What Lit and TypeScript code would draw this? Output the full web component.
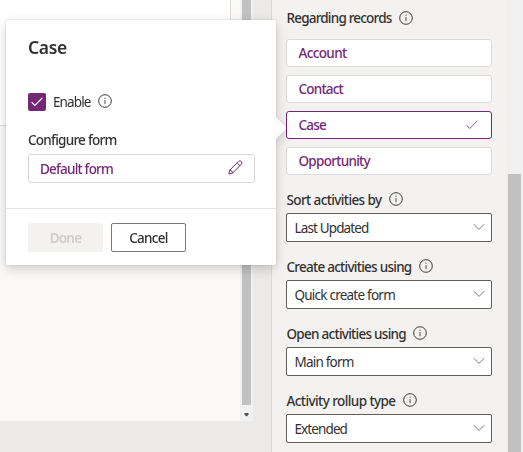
import { LitElement, html, css } from "lit";
import { customElement, property } from "lit/decorators.js";

/** Text set to a given advance width by evening out its tracking. */
@customElement("fit-text")
class FitText extends LitElement {
  @property() text = "";
  @property({ type: Number }) w = 0;
  static styles = css`
    :host { display: inline-block; white-space: nowrap; flex: none; }
  `;
  render() {
    return html`<span>${this.text}</span>`;
  }
  firstUpdated() {
    const span = this.renderRoot.querySelector("span")!;
    const gap = (this.w - span.getBoundingClientRect().width) / this.text.length;
    span.style.letterSpacing = `${gap}px`;
  }
}

const info = html`<svg class="info" width="14" height="14" viewBox="0 0 14 14">
  <circle cx="7" cy="7" r="6.3" fill="none" stroke="#3b3a39" stroke-width="1" />
  <path d="M7 6v4.300M7 3.600v1.100" stroke="#605e5c" stroke-width="1.1" />
</svg>`;

const check = (color: string, width: number) => html`<svg width="12" height="10" viewBox="0 0 12 10">
  <path d="M.6 5.2l3.2 3.3L11.4.9" fill="none" stroke=${color} stroke-width=${width} />
</svg>`;

const chevron = html`<svg width="12" height="8" viewBox="0 0 12 8">
  <path d="M.8 1.2L6 6.4l5.2-5.2" fill="none" stroke="#7a7876" stroke-width="1" />
</svg>`;

const pencil = html`<svg width="15" height="15" viewBox="0 0 15 15">
  <path d="M.8 14.1l1-4L10.5 1.4q1.400-1.200 2.800 0q1.300 1.400 0 2.900L4.700 13zM1.800 10.100q2.300.500 2.900 2.900M9.100 2.800l2.900 2.900"
    fill="none" stroke="#742774" stroke-width="1" stroke-linejoin="round" />
</svg>`;

const records = [
  { name: "Account", w: 48 },
  { name: "Contact", w: 44.500 },
  { name: "Case", w: 27.500, selected: true },
  { name: "Opportunity", w: 71.500 },
];

const options = [
  { label: "Sort activities by", lw: 95, value: "Last Updated", vw: 74 },
  { label: "Create activities using", lw: 125, value: "Quick create form", vw: 100.500 },
  { label: "Open activities using", lw: 119.500, value: "Main form", vw: 59 },
  { label: "Activity rollup type", lw: 109, value: "Extended", vw: 52.500 },
];

@customElement("app-root")
class AppRoot extends LitElement {
  static styles = css`
    :host {
      display: block; position: relative; width: 523px; height: 452px; overflow: hidden;
      font: 13.5px/18px "Noto Sans", "Open Sans", sans-serif; color: #323130; background: #ebeae9;
    }
    * { box-sizing: border-box; }
    svg { display: block; flex: none; }
    .page { display: flex; height: 100%; }
    .left { width: 271px; }
    .canvas { display: flex; width: 253px; height: 421px; background: #faf9f8; }
    .content { width: 240px; }
    .sheet { width: 231px; height: 126px; background: #fff; border: solid #dcdbda; border-width: 0 1px 1px 0; }
    .track { width: 13px; background: #f1f1f1; display: flex; flex-direction: column; align-items: center; }
    .thumb { width: 9px; height: 405px; background: #c1c1c1; margin-bottom: 8px; }
    .side { flex: 1; background: #f3f2f1; border-left: 1px solid #dcdad8; display: flex; justify-content: space-between; }
    .props { padding: 9px 0 0 14px; width: 220px; }
    .label { display: flex; align-items: center; gap: 7px; height: 18px; font-weight: 500; padding-left: .5px; }
    .label .info { position: relative; top: -.5px; }
    .records { display: flex; flex-direction: column; gap: 8px; margin-top: 12px; width: 206px; }
    .record {
      height: 28px; border: 1px solid #dddbd9; border-radius: 3px; background: #fff; color: #742774;
      display: flex; align-items: center; justify-content: space-between; padding: 0 13px 0 11.500px; font-weight: 500;
    }
    .record.selected { border-color: #742774; }
    .options { display: flex; flex-direction: column; gap: 16px; padding-top: 16px; }
    .option { height: 51px; display: flex; flex-direction: column; justify-content: space-between; }
    .option .label { margin-top: -.5px; }
    .select {
      width: 206px; height: 29px; border: 1px solid #605e5c; border-radius: 2px; background: #fff;
      display: flex; align-items: center; justify-content: space-between; padding: 1px 6px 0 7.500px;
    }
    .select svg { margin-top: -2px; }
    .bar { width: 16px; background: #f0f0f0; padding: 174px 0 0 1px; }
    .grip { width: 13px; height: 278px; background: #c1c1c1; }
    .callout {
      position: absolute; left: 6px; top: 20px; width: 270px; height: 245px;
      filter: drop-shadow(0 4px 6px rgba(0, 0, 0, .16)) drop-shadow(0 0 1px rgba(0, 0, 0, .14));
    }
    .box { background: #fff; height: 100%; border-radius: 2px; }
    .beak { position: absolute; left: 269px; top: 97px; width: 11px; height: 22px; background: #fff; clip-path: polygon(0 0, 1px 0, 100% 46%, 100% 54%, 1px 100%, 0 100%); }
    .main { height: 189px; padding: 15px 21px 0 22px; border-bottom: 1px solid #e6e5e4; }
    .title { font-size: 17.5px; line-height: 24px; font-weight: 600; height: 24px; }
    .enable { display: flex; align-items: center; height: 18px; margin-top: 34px; }
    .tick { width: 18px; height: 18px; border-radius: 2px; background: #742774; display: flex; align-items: center; justify-content: center; margin-right: 7px; }
    .enable .info { margin-left: 7px; position: relative; top: -1.500px; }
    .form { font-weight: 500; margin-top: 20px; height: 18px; }
    .field {
      margin-top: 5px; height: 29px; border: 1px solid #d8d6d4; border-radius: 3px; color: #742774; font-weight: 500;
      display: flex; align-items: center; justify-content: space-between; padding: 0 11px;
    }
    .field svg { margin-top: -2px; }
    .actions { display: flex; gap: 8px; padding: 14px 22px; }
    .btn { width: 75px; height: 29px; border: 1px solid #7b7977; border-radius: 2px; font-weight: 500; display: flex; align-items: center; justify-content: center; }
    .btn.off { background: #f3f2f1; border-color: #f3f2f1; color: #cfcdcb; font-weight: 600; }
  `;
  render() {
    return html`
      <div class="page">
        <div class="left">
          <div class="canvas">
            <div class="content"><div class="sheet"></div></div>
            <div class="track">
              <div class="thumb"></div>
              <svg width="5" height="4" viewBox="0 0 5 4"><path d="M.5 0h4v1.500L3 3.300H2L.5 1.500z" fill="#505050" /></svg>
            </div>
          </div>
        </div>
        <div class="side">
          <div class="props">
            <div class="label"><fit-text text="Regarding records" .w=${105}></fit-text>${info}</div>
            <div class="records">
              ${records.map((r) => html`<div class="record ${r.selected ? "selected" : ""}">
                <fit-text .text=${r.name} .w=${r.w}></fit-text>${r.selected ? check("#8f4f8f", 1) : ""}
              </div>`)}
            </div>
            <div class="options">
              ${options.map((o) => html`<div class="option">
                <div class="label"><fit-text .text=${o.label} .w=${o.lw}></fit-text>${info}</div>
                <div class="select"><fit-text .text=${o.value} .w=${o.vw}></fit-text>${chevron}</div>
              </div>`)}
            </div>
          </div>
          <div class="bar"><div class="grip"></div></div>
        </div>
      </div>
      <div class="callout">
        <div class="box">
          <div class="main">
            <div class="title"><fit-text text="Case" .w=${39}></fit-text></div>
            <div class="enable">
              <div class="tick">${check("#fff", 1.15)}</div>
              <fit-text text="Enable" .w=${37.5}></fit-text>${info}
            </div>
            <div class="form"><fit-text text="Configure form" .w=${88.5}></fit-text></div>
            <div class="field"><fit-text text="Default form" .w=${73}></fit-text>${pencil}</div>
          </div>
          <div class="actions">
            <div class="btn off"><fit-text text="Done" .w=${31.5}></fit-text></div>
            <div class="btn"><fit-text text="Cancel" .w=${38.5}></fit-text></div>
          </div>
        </div>
        <div class="beak"></div>
      </div>
    `;
  }
}
